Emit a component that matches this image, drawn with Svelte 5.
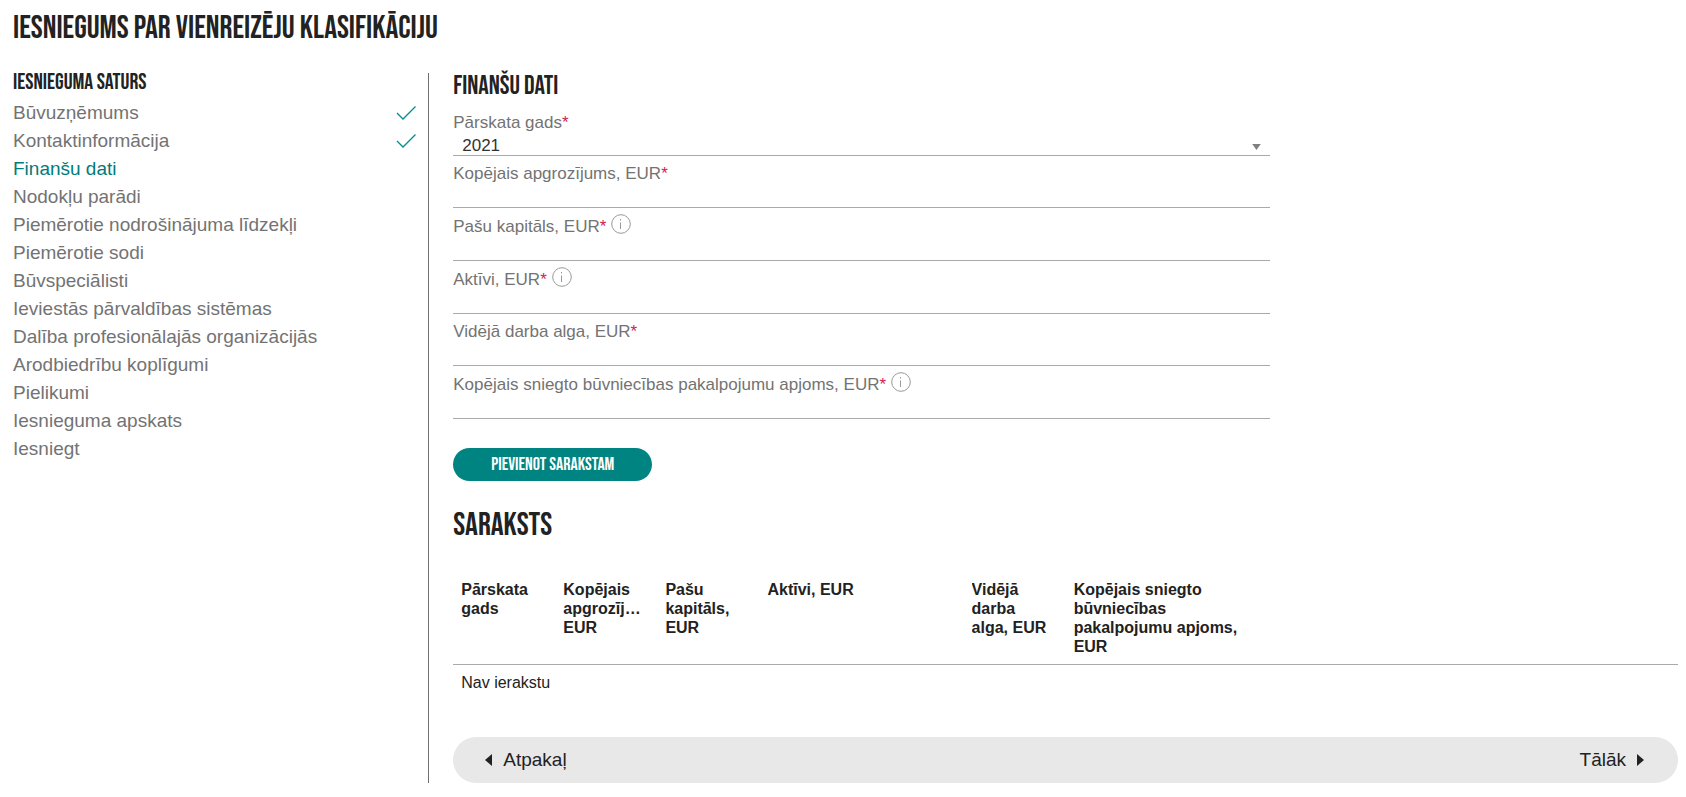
<script>
  let gads = $state('2021')
  let aktivais = $state('Finanšu dati')

  const saturs = [
    { nosaukums: 'Būvuzņēmums', gatavs: true },
    { nosaukums: 'Kontaktinformācija', gatavs: true },
    { nosaukums: 'Finanšu dati' },
    { nosaukums: 'Nodokļu parādi' },
    { nosaukums: 'Piemērotie nodrošinājuma līdzekļi' },
    { nosaukums: 'Piemērotie sodi' },
    { nosaukums: 'Būvspeciālisti' },
    { nosaukums: 'Ieviestās pārvaldības sistēmas' },
    { nosaukums: 'Dalība profesionālajās organizācijās' },
    { nosaukums: 'Arodbiedrību koplīgumi' },
    { nosaukums: 'Pielikumi' },
    { nosaukums: 'Iesnieguma apskats' },
    { nosaukums: 'Iesniegt' },
  ]

  let lauki = $state([
    { id: 'apgrozijums', nosaukums: 'Kopējais apgrozījums, EUR', vertiba: '' },
    { id: 'kapitals', nosaukums: 'Pašu kapitāls, EUR', info: true, vertiba: '' },
    { id: 'aktivi', nosaukums: 'Aktīvi, EUR', info: true, vertiba: '' },
    { id: 'alga', nosaukums: 'Vidējā darba alga, EUR', vertiba: '' },
    { id: 'apjoms', nosaukums: 'Kopējais sniegto būvniecības pakalpojumu apjoms, EUR', info: true, vertiba: '' },
  ])

  const kolonnas = [
    { nosaukums: 'Pārskata gads', platums: 1 },
    { nosaukums: 'Kopējais apgrozījums, EUR', platums: 1 },
    { nosaukums: 'Pašu kapitāls, EUR', platums: 1 },
    { nosaukums: 'Aktīvi, EUR', platums: 2 },
    { nosaukums: 'Vidējā darba alga, EUR', platums: 1 },
    { nosaukums: 'Kopējais sniegto būvniecības pakalpojumu apjoms, EUR', platums: 2 },
    { nosaukums: '', platums: 4 },
  ]

  let ieraksti = $state([])

  function pievienot(e) {
    e.preventDefault()
    ieraksti.push([gads, ...lauki.map(l => l.vertiba), ''])
    lauki.forEach(l => l.vertiba = '')
  }
</script>

<div class="app">
  <h1>Iesniegums par vienreizēju klasifikāciju</h1>

  <div class="saturs">
    <nav>
      <h4>Iesnieguma saturs</h4>
      <ul>
        {#each saturs as solis}
          <li>
            <a
              href="#solis"
              class:aktivs={aktivais === solis.nosaukums}
              onclick={() => aktivais = solis.nosaukums}
            >
              {solis.nosaukums}
            </a>
            {#if solis.gatavs}
              <svg class="kekss" viewBox="0 0 20 14" aria-hidden="true">
                <path d="M1 7 L7 13 L19.5 0.5" />
              </svg>
            {/if}
          </li>
        {/each}
      </ul>
    </nav>

    <main>
      <h3>Finanšu dati</h3>
      <form onsubmit={pievienot}>
        <div class="lauks">
          <label for="gads">Pārskata gads<span class="obligats">*</span></label>
          <div class="izvele">
            <select id="gads" bind:value={gads}>
              <option>2021</option>
              <option>2020</option>
              <option>2019</option>
            </select>
            <svg class="bulta" viewBox="0 0 10 7" aria-hidden="true"><path d="M0 0 H10 L5 7 Z" /></svg>
          </div>
        </div>
        {#each lauki as lauks (lauks.id)}
          <div class="lauks" class:ar-info={lauks.info}>
            <div class="rinda">
              <label for={lauks.id}>{lauks.nosaukums}<span class="obligats">*</span></label>
              {#if lauks.info}
                <button type="button" class="info" aria-label="Paskaidrojums">
                  <svg viewBox="0 0 20 20" aria-hidden="true">
                    <circle cx="10" cy="10" r="9.3" />
                    <path d="M9.5 5 V6.5 M9.5 8.5 V15" />
                  </svg>
                </button>
              {/if}
            </div>
            <input id={lauks.id} type="text" bind:value={lauks.vertiba} />
          </div>
        {/each}
        <button class="pievienot">Pievienot sarakstam</button>
      </form>

      <h2>Saraksts</h2>
      <table>
        <colgroup>
          {#each kolonnas as k}
            <col style="width: {k.platums / 12 * 100}%" />
          {/each}
        </colgroup>
        <thead>
          <tr>
            {#each kolonnas as k}
              <th><div>{k.nosaukums}</div></th>
            {/each}
          </tr>
        </thead>
        <tbody>
          {#each ieraksti as ieraksts}
            <tr>
              {#each ieraksts as vertiba}
                <td>{vertiba}</td>
              {/each}
            </tr>
          {:else}
            <tr><td colspan={kolonnas.length}>Nav ierakstu</td></tr>
          {/each}
        </tbody>
      </table>

      <div class="navigacija">
        <button type="button">
          <svg viewBox="0 0 7 12" aria-hidden="true"><path d="M7 0 V12 L0 6 Z" /></svg>
          Atpakaļ
        </button>
        <button type="button">
          Tālāk
          <svg viewBox="0 0 7 12" aria-hidden="true"><path d="M0 0 V12 L7 6 Z" /></svg>
        </button>
      </div>
    </main>
  </div>
</div>

<style>
  :global(body) {
    margin: 0;
    background: #fff;
  }

  .app {
    padding: 9px 8px 14px 13px;
    font-family: 'Liberation Sans', Arial, sans-serif;
    font-size: 17px;
    color: #222;
  }

  h1, h2, h3, h4, .pievienot {
    margin: 0;
    font-family: 'Bebas Neue', 'Liberation Sans Narrow', 'Roboto Condensed', 'Liberation Sans', sans-serif;
    font-weight: 400;
    text-transform: uppercase;
  }

  h1, h2 {
    font-size: 32px;
    line-height: 40px;
  }

  h3 {
    font-size: 26px;
    line-height: 28px;
  }

  h4 {
    font-size: 22px;
    line-height: 20px;
  }

  .saturs {
    display: flex;
    margin-top: 24px;
  }

  nav {
    box-sizing: border-box;
    width: 25%;
    padding-right: 12px;
    border-right: 1px solid #707070;
  }

  ul {
    list-style: none;
    margin: 6px 0 0;
    padding: 0;
  }

  li {
    display: flex;
    justify-content: space-between;
    align-items: center;
    height: 28px;
  }

  li a {
    font-size: 19px;
    line-height: 28px;
    color: #737373;
    text-decoration: none;
  }

  li a.aktivs {
    color: #007c7a;
  }

  .kekss {
    width: 20px;
    height: 14px;
    fill: none;
    stroke: #008f8c;
    stroke-width: 1.3;
  }

  main {
    flex: 1;
    min-width: 0;
    padding-left: 24px;
  }

  form {
    width: 66.67%;
    margin-top: 10px;
  }

  .lauks {
    margin-bottom: 6px;
  }

  label {
    line-height: 24px;
    color: #737373;
  }

  .obligats {
    color: #d5214f;
  }

  .rinda {
    display: flex;
    height: 24px;
  }

  .ar-info .rinda {
    align-items: flex-end;
    height: 25px;
  }

  .info {
    align-self: flex-start;
    width: 20px;
    height: 20px;
    margin-left: 5px;
    padding: 0;
    border: none;
    background: none;
    cursor: pointer;
  }

  .info svg {
    display: block;
    fill: none;
    stroke: #999;
  }

  input, select {
    display: block;
    box-sizing: border-box;
    width: 100%;
    height: 22px;
    padding: 0 9px;
    border: none;
    border-bottom: 1px solid #aaa;
    border-radius: 0;
    outline: none;
    background: #fff;
    font-family: inherit;
    font-size: 17px;
    color: #333;
  }

  select {
    height: 21px;
    appearance: none;
  }

  .izvele {
    position: relative;
  }

  .bulta {
    position: absolute;
    right: 9px;
    top: 9px;
    width: 9px;
    height: 6px;
    fill: #808080;
    pointer-events: none;
  }

  .pievienot {
    display: block;
    height: 33px;
    margin-top: 29px;
    padding: 0 38px;
    border: none;
    border-radius: 17px;
    background: #008481;
    color: #fff;
    font-size: 18px;
    cursor: pointer;
  }

  h2 {
    margin-top: 25px;
  }

  table {
    width: 100%;
    margin-top: 26px;
    border-collapse: collapse;
    table-layout: fixed;
    font-size: 16px;
    line-height: 19px;
  }

  th {
    height: 75px;
    padding: 8px 12px 8px 8px;
    border-bottom: 1px solid #aaa;
    text-align: left;
    vertical-align: top;
  }

  th div {
    overflow: hidden;
    text-overflow: ellipsis;
  }

  td {
    padding: 8px;
  }

  .navigacija {
    display: flex;
    justify-content: space-between;
    margin-top: 37px;
    padding: 0 34px 0 32px;
    border-radius: 23px;
    background: #e8e8e8;
  }

  .navigacija button {
    display: flex;
    align-items: center;
    gap: 11px;
    height: 46px;
    padding: 0;
    border: none;
    background: none;
    font-family: inherit;
    font-size: 19px;
    color: #222;
    cursor: pointer;
  }

  .navigacija svg {
    width: 7px;
    height: 12px;
    fill: #222;
  }
</style>
